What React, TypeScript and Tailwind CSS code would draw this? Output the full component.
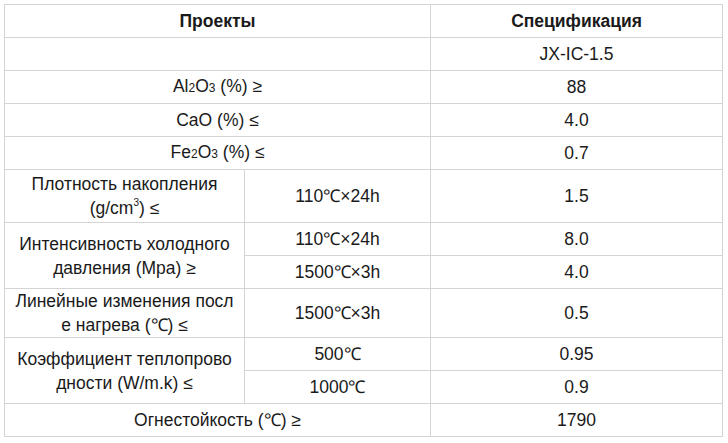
import React from 'react'

const cell = 'border border-[#d4d4d4] px-1 py-0 text-center align-middle'

function Sub({ children }: { children: React.ReactNode }) {
  return <span className="text-[12px]">{children}</span>
}

export default function App() {
  return (
    <div className="bg-white w-[728px] h-[443px] pt-[4px] pl-[4px] text-[#1a1a1a]" style={{ fontFamily: '"Liberation Sans", Arial, sans-serif' }}>
      <table className="table-fixed border-collapse w-[718px] text-[17.5px] leading-[24px]">
        <colgroup>
          <col className="w-[240px]" />
          <col className="w-[186px]" />
          <col className="w-[292px]" />
        </colgroup>
        <tbody>
          <tr className="h-[33px]">
            <td colSpan={2} className={`${cell} font-bold`}>Проекты</td>
            <td className={`${cell} font-bold`}>Спецификация</td>
          </tr>
          <tr className="h-[33px]">
            <td colSpan={2} className={cell}></td>
            <td className={cell}>JX-IC-1.5</td>
          </tr>
          <tr className="h-[33px]">
            <td colSpan={2} className={cell}>Al<Sub>2</Sub>O<Sub>3</Sub> (%) ≥</td>
            <td className={cell}>88</td>
          </tr>
          <tr className="h-[33px]">
            <td colSpan={2} className={cell}>CaO (%) ≤</td>
            <td className={cell}>4.0</td>
          </tr>
          <tr className="h-[33px]">
            <td colSpan={2} className={cell}>Fe<Sub>2</Sub>O<Sub>3</Sub> (%) ≤</td>
            <td className={cell}>0.7</td>
          </tr>
          <tr className="h-[53px]">
            <td className={cell}>
              Плотность накопления
              <br />
              (g/cm<span className="relative -top-[8px] text-[10px] leading-none">3</span>) ≤
            </td>
            <td className={cell}>110℃×24h</td>
            <td className={cell}>1.5</td>
          </tr>
          <tr className="h-[33px]">
            <td rowSpan={2} className={cell}>
              Интенсивность холодного
              <br />
              давления (Mpa) ≥
            </td>
            <td className={cell}>110℃×24h</td>
            <td className={cell}>8.0</td>
          </tr>
          <tr className="h-[33px]">
            <td className={cell}>1500℃×3h</td>
            <td className={cell}>4.0</td>
          </tr>
          <tr className="h-[49px]">
            <td className={cell}>
              Линейные изменения посл
              <br />е нагрева (℃) ≤
            </td>
            <td className={cell}>1500℃×3h</td>
            <td className={cell}>0.5</td>
          </tr>
          <tr className="h-[33px]">
            <td rowSpan={2} className={cell}>
              Коэффициент теплопрово
              <br />
              дности (W/m.k) ≤
            </td>
            <td className={cell}>500℃</td>
            <td className={cell}>0.95</td>
          </tr>
          <tr className="h-[33px]">
            <td className={cell}>1000℃</td>
            <td className={cell}>0.9</td>
          </tr>
          <tr className="h-[33px]">
            <td colSpan={2} className={cell}>Огнестойкость (℃) ≥</td>
            <td className={cell}>1790</td>
          </tr>
        </tbody>
      </table>
    </div>
  )
}
